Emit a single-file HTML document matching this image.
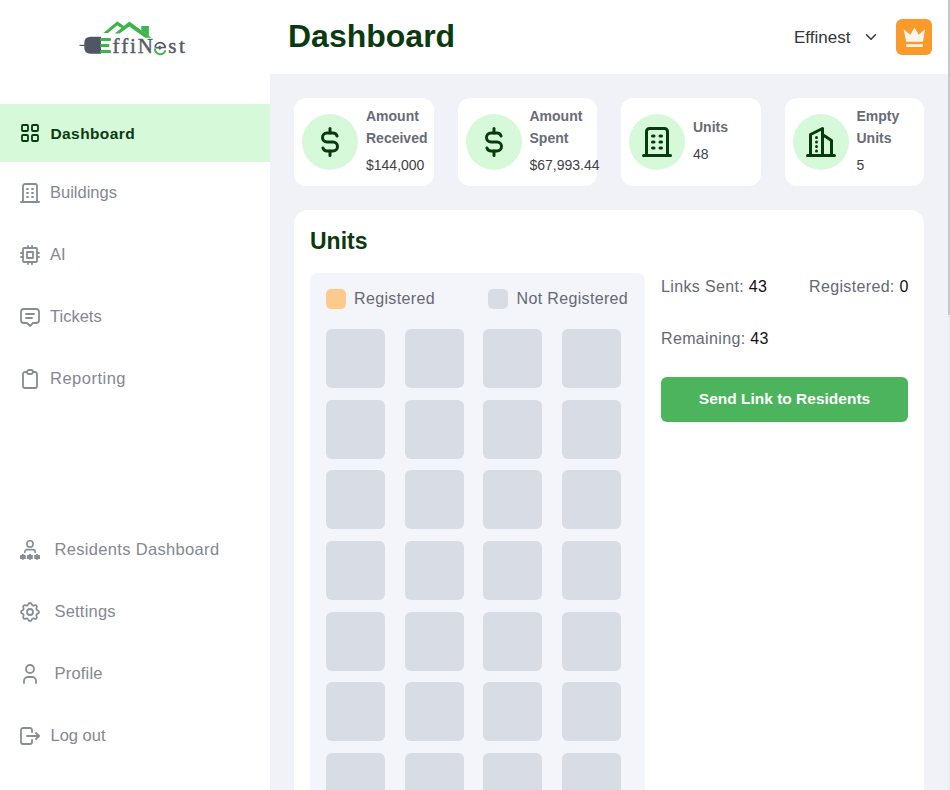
<!DOCTYPE html>
<html>
<head>
<meta charset="utf-8">
<style>
*{margin:0;padding:0;box-sizing:border-box}
html,body{width:950px;height:790px;overflow:hidden;background:#fff;font-family:"Liberation Sans",sans-serif}
.abs{position:absolute}
.t{position:absolute;white-space:nowrap;line-height:20px}
#side{position:absolute;left:0;top:0;width:270px;height:790px;background:#fff}
#main{position:absolute;left:270px;top:74px;width:678px;height:716px;background:#f0f2f7}
#hdr{position:absolute;left:270px;top:0;width:678px;height:74px;background:#fff}
.nav{color:#838893;font-size:16.5px}
.ico{position:absolute;width:24px;height:24px;fill:none;stroke:#878c96;stroke-width:1.8;stroke-linecap:round;stroke-linejoin:round}
.card{position:absolute;top:98px;width:139.5px;height:88px;background:#fff;border-radius:12px}
.circ{position:absolute;left:8px;top:16px;width:56px;height:56px;border-radius:50%;background:#d6f9da}
.cico{position:absolute;left:-10px;top:-10px;width:36px;height:36px;fill:none;stroke:#073b0e;stroke-width:2;stroke-linecap:round;stroke-linejoin:round}
.ct{font-size:14px;font-weight:bold;color:#686c76}
.cv{font-size:14px;color:#3f4046}
#panel{position:absolute;left:294px;top:210px;width:630px;height:600px;background:#fff;border-radius:14px}
#grid{position:absolute;left:310px;top:273px;width:335px;height:560px;background:#f3f5fa;border-radius:7px}
.cell{position:absolute;width:59px;height:59px;background:#d8dce4;border-radius:6px}
.lg{font-size:16px;color:#656973;letter-spacing:0.35px}
.num{color:#111}
#sb{position:absolute;left:948px;top:0;width:2px;height:790px;background:#e9ecf2}
#thumb{position:absolute;left:948px;top:0;width:2px;height:315px;background:#c3c8d3}
</style>
</head>
<body>
<div id="side"></div>
<div id="hdr"></div>
<div id="main"></div>

<!-- logo -->
<svg class="abs" style="left:0;top:0" width="270" height="74" viewBox="0 0 270 74">
  <line x1="79.5" y1="45.4" x2="85" y2="45.4" stroke="#4f5764" stroke-width="1.2"/>
  <path d="M101 36.8H90.5Q84.3 36.8 84.3 43V47.5Q84.3 53.7 90.5 53.7H101Z" fill="#4f5764"/>
  <rect x="100" y="38" width="11" height="2.9" rx="1.2" fill="#3db54a"/>
  <rect x="100" y="44" width="9.4" height="2.9" rx="1.2" fill="#3db54a"/>
  <rect x="100" y="50" width="11" height="2.9" rx="1.2" fill="#3db54a"/>
  <polygon points="103.4,33.1 117.3,21.3 124.6,26.4 122.4,28.4 117.3,25.5 107.9,33.1" fill="#3db54a"/>
  <polygon points="114.7,33.4 129.3,21.6 151.4,37.7 145.2,37.7 129.3,26.4 119.5,33.4" fill="#3db54a"/>
  <polygon points="141.3,26 148.9,26 148.9,36 141.3,30.6" fill="#3db54a"/>
  <g fill="#555d69" stroke="#555d69" stroke-width="0.45" font-family="Liberation Serif" font-size="21">
    <text x="112.6" y="52.7">f</text>
    <text x="121.3" y="52.7">f</text>
    <text x="129.9" y="52.7">i</text>
    <text x="137.8" y="52.7">N</text>
    <text x="168.2" y="52.7">s</text>
    <text x="179" y="52.7">t</text>
  </g>
  <path d="M155.2 47.6A5 5 0 0 1 165.2 47.6" fill="none" stroke="#525a66" stroke-width="1.9"/>
  <path d="M155.5 47.8H158.5L160 46.2L159.5 49L161.5 47.6H165.8" fill="none" stroke="#525a66" stroke-width="1.5" stroke-linejoin="round"/>
  <path d="M155 48.5A5.3 5.3 0 0 0 165.4 50.3" fill="none" stroke="#3db54a" stroke-width="2"/>
</svg>

<!-- header -->
<div class="t" style="left:288px;top:20px;font-size:32px;font-weight:bold;color:#0b3a10;line-height:32px">Dashboard</div>
<div class="t" style="left:794px;top:27.5px;font-size:17px;color:#35363a">Effinest</div>
<svg class="abs" style="left:861.75px;top:27.5px;width:18px;height:18px" viewBox="0 0 24 24" fill="none" stroke="#35363a" stroke-width="2" stroke-linecap="round" stroke-linejoin="round"><path d="M6 9l6 6l6 -6"/></svg>
<div class="abs" style="left:896px;top:19px;width:36px;height:36px;border-radius:6px;background:#f99a2b"></div>
<svg class="abs" style="left:896px;top:19px" width="36" height="36" viewBox="896 19 36 36">
  <polygon points="903.6,29.3 910.2,34.8 914.6,27.6 918.6,34.8 925,29.3 923,41.8 906.2,41.8" fill="#fdf4ec"/>
  <path d="M906.2 44.3H922.9V46A1 1 0 0 1 921.9 47H907.2A1 1 0 0 1 906.2 46Z" fill="#fdf4ec"/>
</svg>

<!-- sidebar nav -->
<div class="abs" style="left:0;top:104px;width:270px;height:58px;background:#d6f9da"></div>
<svg class="ico" style="left:18px;top:121px;stroke:#073b0e" viewBox="0 0 24 24"><path d="M4 5a1 1 0 0 1 1 -1h4a1 1 0 0 1 1 1v4a1 1 0 0 1 -1 1h-4a1 1 0 0 1 -1 -1z"/><path d="M14 5a1 1 0 0 1 1 -1h4a1 1 0 0 1 1 1v4a1 1 0 0 1 -1 1h-4a1 1 0 0 1 -1 -1z"/><path d="M4 15a1 1 0 0 1 1 -1h4a1 1 0 0 1 1 1v4a1 1 0 0 1 -1 1h-4a1 1 0 0 1 -1 -1z"/><path d="M14 15a1 1 0 0 1 1 -1h4a1 1 0 0 1 1 1v4a1 1 0 0 1 -1 1h-4a1 1 0 0 1 -1 -1z"/></svg>
<div class="t" style="left:50.5px;top:124px;font-size:15.5px;font-weight:bold;color:#0b3a10;letter-spacing:0.4px">Dashboard</div>

<svg class="ico" style="left:18px;top:181px" viewBox="0 0 24 24"><path d="M3 21l18 0"/><path d="M9 8l1 0"/><path d="M9 12l1 0"/><path d="M9 16l1 0"/><path d="M14 8l1 0"/><path d="M14 12l1 0"/><path d="M14 16l1 0"/><path d="M5 21v-16a2 2 0 0 1 2 -2h10a2 2 0 0 1 2 2v16"/></svg>
<div class="t nav" style="left:50px;top:182px">Buildings</div>

<svg class="ico" style="left:18px;top:243px" viewBox="0 0 24 24"><path d="M5 5m0 1a1 1 0 0 1 1 -1h12a1 1 0 0 1 1 1v12a1 1 0 0 1 -1 1h-12a1 1 0 0 1 -1 -1z"/><path d="M9 9h6v6h-6z"/><path d="M3 10h2"/><path d="M3 14h2"/><path d="M10 3v2"/><path d="M14 3v2"/><path d="M21 10h-2"/><path d="M21 14h-2"/><path d="M14 21v-2"/><path d="M10 21v-2"/></svg>
<div class="t nav" style="left:50px;top:244px">AI</div>

<svg class="ico" style="left:18px;top:305px" viewBox="0 0 24 24"><path d="M8 9h8"/><path d="M8 13h6"/><path d="M9 18h-3a3 3 0 0 1 -3 -3v-8a3 3 0 0 1 3 -3h12a3 3 0 0 1 3 3v8a3 3 0 0 1 -3 3h-3l-3 3l-3 -3z"/></svg>
<div class="t nav" style="left:50px;top:306px">Tickets</div>

<svg class="ico" style="left:18px;top:367px" viewBox="0 0 24 24"><path d="M9 5h-2a2 2 0 0 0 -2 2v12a2 2 0 0 0 2 2h10a2 2 0 0 0 2 -2v-12a2 2 0 0 0 -2 -2h-2"/><path d="M9 3m0 2a2 2 0 0 1 2 -2h2a2 2 0 0 1 2 2v0a2 2 0 0 1 -2 2h-2a2 2 0 0 1 -2 -2z"/></svg>
<div class="t nav" style="left:50px;top:368px;letter-spacing:0.5px">Reporting</div>

<svg class="abs" style="left:18px;top:538px" width="24" height="24" viewBox="18 538 24 24">
  <circle cx="30" cy="543.9" r="3.1" fill="none" stroke="#878c96" stroke-width="1.6"/>
  <path d="M24.8 552.5v-0.6a2.3 2.3 0 0 1 2.3 -2.3h5.8a2.3 2.3 0 0 1 2.3 2.3v0.6" fill="none" stroke="#878c96" stroke-width="1.6" stroke-linecap="round"/>
  <g fill="#878c96">
    <rect x="20" y="555" width="5.8" height="4" rx="0.6"/><rect x="22" y="554" width="1.8" height="5.8"/>
    <rect x="27" y="555" width="5.8" height="4" rx="0.6"/><rect x="29" y="554" width="1.8" height="5.8"/>
    <rect x="34.2" y="555" width="5.8" height="4" rx="0.6"/><rect x="36.2" y="554" width="1.8" height="5.8"/>
  </g>
</svg>
<div class="t nav" style="left:54.5px;top:539px;letter-spacing:0.33px">Residents Dashboard</div>

<svg class="ico" style="left:18px;top:600px" viewBox="0 0 24 24"><path d="M10.325 4.317c.426 -1.756 2.924 -1.756 3.35 0a1.724 1.724 0 0 0 2.573 1.066c1.543 -.94 3.31 .826 2.37 2.37a1.724 1.724 0 0 0 1.065 2.572c1.756 .426 1.756 2.924 0 3.35a1.724 1.724 0 0 0 -1.066 2.573c.94 1.543 -.826 3.31 -2.37 2.37a1.724 1.724 0 0 0 -2.572 1.065c-.426 1.756 -2.924 1.756 -3.35 0a1.724 1.724 0 0 0 -2.573 -1.066c-1.543 .94 -3.31 -.826 -2.37 -2.37a1.724 1.724 0 0 0 -1.065 -2.572c-1.756 -.426 -1.756 -2.924 0 -3.35a1.724 1.724 0 0 0 1.066 -2.573c-.94 -1.543 .826 -3.31 2.37 -2.37c1 .608 2.296 .07 2.572 -1.065z"/><path d="M9 12a3 3 0 1 0 6 0a3 3 0 0 0 -6 0"/></svg>
<div class="t nav" style="left:54.5px;top:601px;letter-spacing:0.2px">Settings</div>

<svg class="ico" style="left:18px;top:662px" viewBox="0 0 24 24"><path d="M8 7a4 4 0 1 0 8 0a4 4 0 0 0 -8 0"/><path d="M6 21v-2a4 4 0 0 1 4 -4h4a4 4 0 0 1 4 4v2"/></svg>
<div class="t nav" style="left:54.5px;top:663px;letter-spacing:0.2px">Profile</div>

<svg class="ico" style="left:18px;top:724px" viewBox="0 0 24 24"><path d="M14 8v-2a2 2 0 0 0 -2 -2h-7a2 2 0 0 0 -2 2v12a2 2 0 0 0 2 2h7a2 2 0 0 0 2 -2v-2"/><path d="M9 12h12l-3 -3"/><path d="M18 15l3 -3"/></svg>
<div class="t nav" style="left:50.5px;top:725px">Log out</div>

<!-- stat cards -->
<div class="card" style="left:294px">
  <div class="circ"><svg class="cico" style="left:10px;top:10px" viewBox="0 0 24 24"><path d="M16.7 8a3 3 0 0 0 -2.7 -2h-4a3 3 0 0 0 0 6h4a3 3 0 0 1 0 6h-4a3 3 0 0 1 -2.7 -2"/><path d="M12 3v3m0 12v3"/></svg></div>
  <div class="t ct" style="left:72px;top:7px;line-height:22px">Amount<br>Received</div>
  <div class="t cv" style="left:72px;top:56px;line-height:22px">$144,000</div>
</div>
<div class="card" style="left:457.5px">
  <div class="circ"><svg class="cico" style="left:10px;top:10px" viewBox="0 0 24 24"><path d="M16.7 8a3 3 0 0 0 -2.7 -2h-4a3 3 0 0 0 0 6h4a3 3 0 0 1 0 6h-4a3 3 0 0 1 -2.7 -2"/><path d="M12 3v3m0 12v3"/></svg></div>
  <div class="t ct" style="left:72px;top:7px;line-height:22px">Amount<br>Spent</div>
  <div class="t cv" style="left:72px;top:56px;line-height:22px">$67,993.44</div>
</div>
<div class="card" style="left:621px">
  <div class="circ"><svg class="cico" style="left:10px;top:10px" viewBox="0 0 24 24"><path d="M3 21l18 0"/><path d="M9 8l1 0"/><path d="M9 12l1 0"/><path d="M9 16l1 0"/><path d="M14 8l1 0"/><path d="M14 12l1 0"/><path d="M14 16l1 0"/><path d="M5 21v-16a2 2 0 0 1 2 -2h10a2 2 0 0 1 2 2v16"/></svg></div>
  <div class="t ct" style="left:72px;top:18px;line-height:22px">Units</div>
  <div class="t cv" style="left:72px;top:45px;line-height:22px">48</div>
</div>
<div class="card" style="left:784.5px">
  <div class="circ"><svg class="cico" style="left:10px;top:10px" viewBox="0 0 24 24"><path d="M3 21l18 0"/><path d="M5 21v-14l8 -4v18"/><path d="M19 21v-10l-6 -4"/><path d="M9 9l0 .01"/><path d="M9 12l0 .01"/><path d="M9 15l0 .01"/><path d="M9 18l0 .01"/></svg></div>
  <div class="t ct" style="left:72px;top:7px;line-height:22px">Empty<br>Units</div>
  <div class="t cv" style="left:72px;top:56px;line-height:22px">5</div>
</div>

<!-- units panel -->
<div id="panel"></div>
<div class="t" style="left:310px;top:228px;font-size:23px;font-weight:bold;color:#0b3a10;line-height:26px">Units</div>
<div id="grid"></div>
<div class="abs" style="left:326px;top:289px;width:20px;height:20px;border-radius:5px;background:#fdca8e"></div>
<div class="t lg" style="left:354px;top:289px">Registered</div>
<div class="abs" style="left:488px;top:289px;width:20px;height:20px;border-radius:5px;background:#d8dce4"></div>
<div class="t lg" style="left:516.5px;top:289px">Not Registered</div>
<div class="cell" style="left:326.00px;top:329.00px"></div><div class="cell" style="left:404.67px;top:329.00px"></div><div class="cell" style="left:483.33px;top:329.00px"></div><div class="cell" style="left:562.00px;top:329.00px"></div><div class="cell" style="left:326.00px;top:399.67px"></div><div class="cell" style="left:404.67px;top:399.67px"></div><div class="cell" style="left:483.33px;top:399.67px"></div><div class="cell" style="left:562.00px;top:399.67px"></div><div class="cell" style="left:326.00px;top:470.34px"></div><div class="cell" style="left:404.67px;top:470.34px"></div><div class="cell" style="left:483.33px;top:470.34px"></div><div class="cell" style="left:562.00px;top:470.34px"></div><div class="cell" style="left:326.00px;top:541.01px"></div><div class="cell" style="left:404.67px;top:541.01px"></div><div class="cell" style="left:483.33px;top:541.01px"></div><div class="cell" style="left:562.00px;top:541.01px"></div><div class="cell" style="left:326.00px;top:611.68px"></div><div class="cell" style="left:404.67px;top:611.68px"></div><div class="cell" style="left:483.33px;top:611.68px"></div><div class="cell" style="left:562.00px;top:611.68px"></div><div class="cell" style="left:326.00px;top:682.35px"></div><div class="cell" style="left:404.67px;top:682.35px"></div><div class="cell" style="left:483.33px;top:682.35px"></div><div class="cell" style="left:562.00px;top:682.35px"></div><div class="cell" style="left:326.00px;top:753.02px"></div><div class="cell" style="left:404.67px;top:753.02px"></div><div class="cell" style="left:483.33px;top:753.02px"></div><div class="cell" style="left:562.00px;top:753.02px"></div>

<div class="t lg" style="left:661px;top:277px">Links Sent: <span class="num">43</span></div>
<div class="t lg" style="left:809px;top:277px">Registered: <span class="num">0</span></div>
<div class="t lg" style="left:661px;top:329px">Remaining: <span class="num">43</span></div>
<div class="abs" style="left:661px;top:377px;width:247px;height:44.5px;border-radius:6px;background:#4bb45c"></div>
<div class="t" style="left:661px;top:389px;width:247px;text-align:center;font-size:15.5px;font-weight:bold;color:#fff">Send Link to Residents</div>

<div id="sb"></div>
<div id="thumb"></div>
</body>
</html>
